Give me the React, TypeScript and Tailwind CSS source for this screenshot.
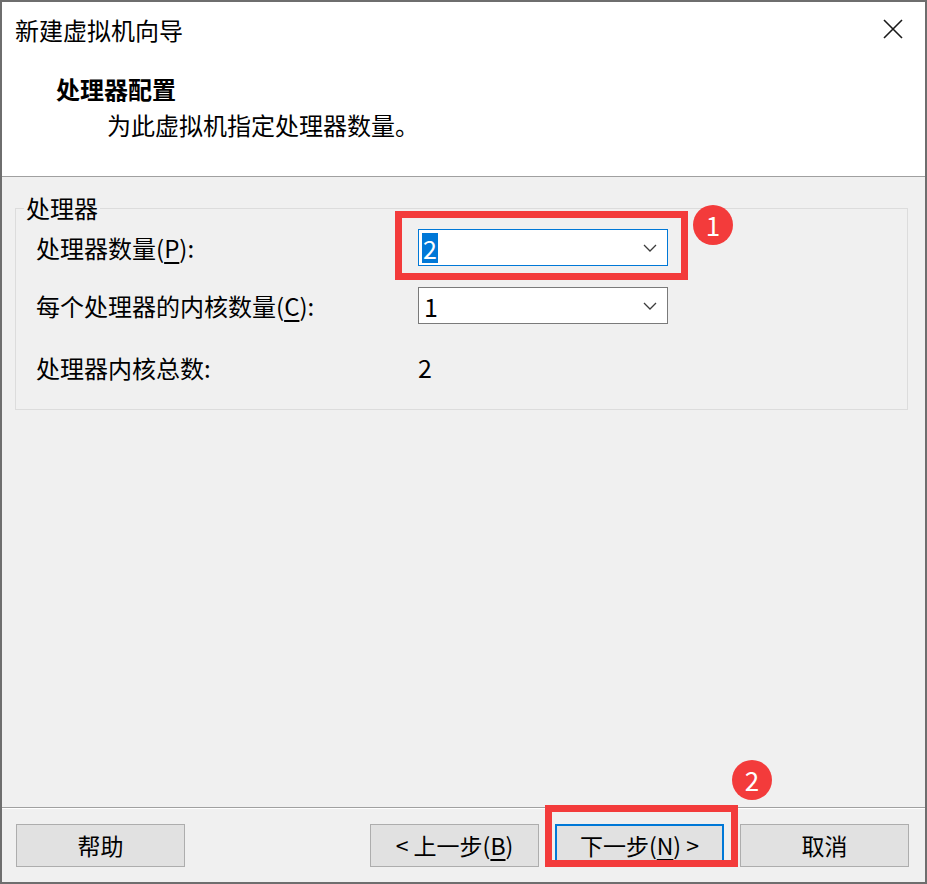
import React from 'react'

const font = { fontFamily: '"Noto Sans CJK SC", "Noto Sans", sans-serif' }

const Chevron = () => (
    <svg width="14" height="8" viewBox="0 0 14 8" fill="none">
        <path d="M1 1 L7 7 L13 1" stroke="#3c3c3c" strokeWidth="1.3" />
    </svg>
)

const Badge: React.FC<{ n: string; className: string }> = ({ n, className }) => (
    <div
        className={
            'absolute w-[40px] h-[40px] rounded-full bg-[#f33b3b] text-white flex items-center justify-center text-[26px] leading-none ' +
            className
        }
    >
        {n}
    </div>
)

const Button: React.FC<{ children: React.ReactNode; primary?: boolean }> = ({ children, primary }) => (
    <button
        className={
            'w-[169px] h-[43px] bg-[#e1e1e1] text-[23px] text-black flex items-center justify-center ' +
            (primary ? 'border-2 border-[#0078d7]' : 'border border-[#adadad]')
        }
    >
        {children}
    </button>
)

export default function App() {
    return (
        <div
            className="relative w-[927px] h-[884px] border-2 border-[#6e6e6e] flex flex-col text-black overflow-hidden"
            style={font}
        >
            {/* header */}
            <div className="h-[175px] bg-white border-b border-[#a0a0a0] flex flex-col">
                <div className="flex items-start justify-between pl-[13px] pr-[22px] pt-[13px]">
                    <div className="text-[24px] leading-[30px]">新建虚拟机向导</div>
                    <svg width="20" height="20" viewBox="0 0 20 20" className="mt-[4px]">
                        <path d="M1 1 L19 19 M19 1 L1 19" stroke="#1a1a1a" strokeWidth="1.6" />
                    </svg>
                </div>
                <div className="pl-[54px] mt-[29px] text-[24px] leading-[30px] font-bold">处理器配置</div>
                <div className="pl-[105px] mt-[6px] text-[24px] leading-[30px]">为此虚拟机指定处理器数量。</div>
            </div>

            {/* body */}
            <div className="flex-1 bg-[#f0f0f0] flex flex-col">
                <fieldset className="ml-[13px] mr-[17px] mt-[16px] h-[217px] border border-[#dcdcdc] pl-[20px] pr-0 pt-[6px] pb-0">
                    <legend className="-ml-[12px] px-[2px] text-[24px] leading-[30px]">处理器</legend>
                    <div className="flex items-center h-[37px]">
                        <div className="w-[382px] text-[24px]">
                            处理器数量(<span className="underline underline-offset-4">P</span>):
                        </div>
                        <div className="w-[250px] h-[37px] bg-white border border-[#0078d7] flex items-center justify-between pl-[3px] pr-[10px]">
                            <span className="bg-[#0078d7] text-white text-[25px] leading-[30px] px-[1px]">2</span>
                            <Chevron />
                        </div>
                    </div>
                    <div className="flex items-center h-[37px] mt-[21px]">
                        <div className="w-[382px] text-[24px]">
                            每个处理器的内核数量(<span className="underline underline-offset-4">C</span>):
                        </div>
                        <div className="w-[250px] h-[37px] bg-white border border-[#7a7a7a] flex items-center justify-between pl-[5px] pr-[10px]">
                            <span className="text-[25px] leading-[30px]">1</span>
                            <Chevron />
                        </div>
                    </div>
                    <div className="flex items-center h-[37px] mt-[25px]">
                        <div className="w-[382px] text-[24px]">处理器内核总数:</div>
                        <div className="text-[25px]">2</div>
                    </div>
                </fieldset>
            </div>

            {/* footer */}
            <div className="h-[75px] bg-[#f0f0f0] border-t border-[#a0a0a0]">
                <div className="border-t border-white flex items-start justify-between pl-[14px] pr-[16px] pt-[15px]">
                    <Button>帮助</Button>
                    <div className="flex gap-[16px]">
                        <Button>
                            &lt; 上一步(<span className="underline underline-offset-4">B</span>)
                        </Button>
                        <Button primary>
                            下一步(<span className="underline underline-offset-4">N</span>) &gt;
                        </Button>
                        <Button>取消</Button>
                    </div>
                </div>
            </div>

            {/* annotations */}
            <div className="absolute left-[393px] top-[209px] w-[293px] h-[69px] border-[7px] border-[#f33b3b]" />
            <Badge n="1" className="left-[691px] top-[203px]" />
            <div className="absolute left-[543px] top-[803px] w-[193px] h-[62px] border-[7px] border-[#f33b3b]" />
            <Badge n="2" className="left-[730px] top-[758px]" />
        </div>
    )
}
